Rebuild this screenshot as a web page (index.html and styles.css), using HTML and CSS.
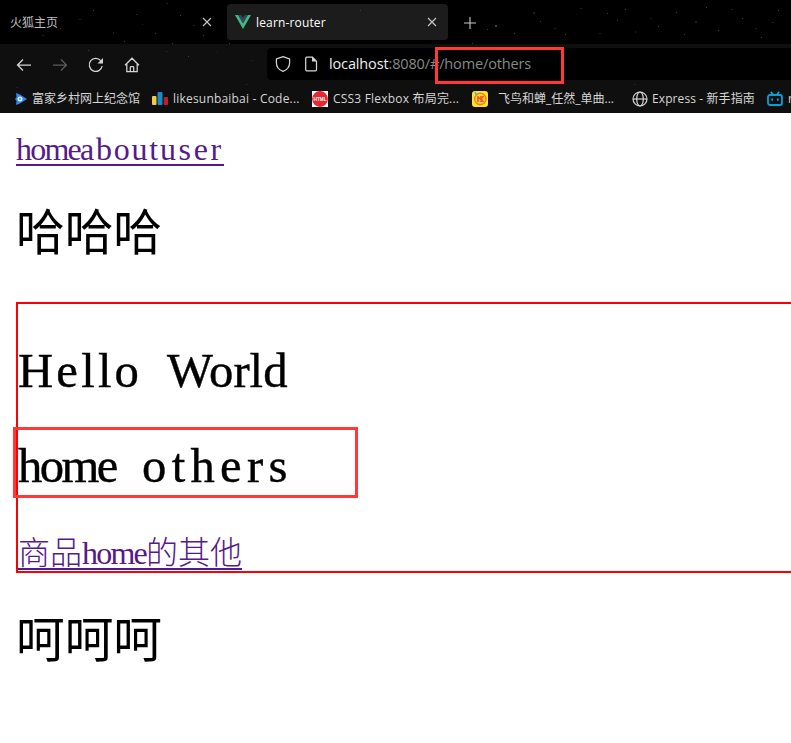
FILE: index.html
```html
<!DOCTYPE html>
<html lang="zh-CN">
<head>
<meta charset="utf-8">
<title>learn-router</title>
<link rel="stylesheet" href="styles.css">
</head>
<body>
<header class="browser">
  <svg class="stars" width="791" height="113" fill="#3c3c3c" aria-hidden="true">
    <path d="M155 33h1v1h-1zM172 43h1v1h-1zM180 15h1v1h-1zM124 41h1v1h-1zM60 28h1v1h-1zM93 10h1v1h-1zM203 35h1v1h-1zM188 56h1v1h-1zM88 50h1v1h-1zM487 29h1v1h-1zM495 25h2v2h-2zM472 43h1v1h-1zM514 33h1v1h-1zM540 21h1v1h-1zM565 34h1v1h-1zM607 13h1v1h-1zM617 20h1v1h-1zM625 9h1v1h-1zM658 26h1v1h-1zM676 12h1v1h-1zM684 34h1v1h-1zM706 7h1v1h-1zM718 30h1v1h-1zM742 18h1v1h-1zM761 37h1v1h-1zM778 10h1v1h-1zM229 43h1v1h-1zM360 10h1v1h-1z"/>
    <path fill="#1e1e1e" d="M30 16h1v1h-1zM42 35h2v1h-2zM79 19h2v1h-2zM113 32h1v2h-1zM136 14h2v1h-2zM142 24h1v1h-1zM166 3h2v1h-2zM193 25h2v1h-2zM251 60h2v1h-2zM216 52h1v1h-1zM166 51h2v1h-2zM533 12h2v2h-2zM554 28h2v1h-2zM580 8h2v1h-2zM599 33h2v1h-2zM635 31h1v2h-1zM650 18h2v1h-1zM695 21h2v2h-2zM731 9h2v1h-2zM755 28h2v1h-2zM772 22h2v1h-2zM16 87h2v1h-2zM246 84h2v1h-2zM634 84h2v1h-2z"/>
  </svg>
  <div class="tabs">
    <div class="tab">
      <span class="tab-title">火狐主页</span>
      <svg class="close" width="10" height="10" viewBox="0 0 10 10"><path d="M1 1l8 8M9 1L1 9"/></svg>
    </div>
    <div class="tab active">
      <svg class="vue" width="16" height="14" viewBox="0 0 16 14"><path fill="#41b883" d="M0 0h3.2L8 8.3 12.8 0H16L8 14z"/><path fill="#35495e" d="M3.2 0h3L8 3.1 9.8 0h3L8 8.3z"/></svg>
      <span class="tab-title learn">learn-router</span>
      <svg class="close" width="10" height="10" viewBox="0 0 10 10"><path d="M1 1l8 8M9 1L1 9"/></svg>
    </div>
    <svg class="plus" width="12" height="12" viewBox="0 0 12 12"><path d="M6 0v12M0 6h12"/></svg>
  </div>
  <nav class="toolbar">
    <div class="buttons">
      <svg width="16" height="16" viewBox="0 0 16 16"><path d="M15 8H1.5M7 2.5L1.5 8 7 13.5"/></svg>
      <svg class="dim" width="16" height="16" viewBox="0 0 16 16"><path d="M1 8h13.5M9 2.5L14.5 8 9 13.5"/></svg>
      <svg width="16" height="16" viewBox="0 0 16 16"><path d="M14.2 9A6.5 6.5 0 1 1 12.8 3.7"/><path class="solid" d="M15 1v5.5H9.5z"/></svg>
      <svg width="16" height="16" viewBox="0 0 16 16"><path d="M1 8.2L8 1.2l7 7M2.8 6.8v7.7h10.4V6.8M6.3 14.5v-4.2q0-.8.8-.8h1.8q.8 0 .8.8v4.2"/></svg>
    </div>
    <div class="urlbar">
      <svg width="16" height="16" viewBox="0 0 16 16"><path d="M8 .7L14.6 3v3.8C14.6 11.2 12 14 8 15.4 4 14 1.4 11.2 1.4 6.8V3z"/></svg>
      <svg width="16" height="16" viewBox="0 0 16 16"><path d="M3.7 1.2H9.5l4 4v8.6q0 1-1 1H3.7q-1 0-1-1V2.2q0-1 1-1z"/><path class="solid" d="M9 1l4.5 4.5H9z"/></svg>
      <span class="url"><span class="host">localhost</span>:8080/#/home/others</span>
    </div>
  </nav>
  <div class="bookmarks">
    <div class="bm b1">
      <svg width="12" height="12" viewBox="0 0 12 12"><path fill="#2f86ed" d="M1 0l4 1.5L12 6 5 10.500 1 12l.5-4L0 6l1.500-2z"/><circle cx="5" cy="6" r="2.5" fill="#d8edff"/><circle cx="5" cy="6" r="1" fill="#4797ed"/></svg>
      <span>富家乡村网上纪念馆</span>
    </div>
    <div class="bm b2">
      <svg width="16" height="14" viewBox="0 0 16 14"><rect y="4" width="4.5" height="9" rx="1" fill="#f7c846"/><rect x="5.5" width="5" height="13" rx="1" fill="#168acb"/><rect x="11.7" y="5" width="4.3" height="8" rx="1" fill="#bb2028"/></svg>
      <span class="wide">likesunbaibai - Code...</span>
    </div>
    <div class="bm b3">
      <svg width="16" height="16" viewBox="0 0 16 16"><path fill="#fff" d="M0 0h16v16H0z"/><circle cx="8" cy="8" r="7.9" fill="#ed252d"/><text x="8" y="10" text-anchor="middle" textLength="13" lengthAdjust="spacingAndGlyphs" class="html-mark">HTML</text></svg>
      <span class="wide">CSS3 Flexbox 布局完...</span>
    </div>
    <div class="bm b4">
      <svg width="16" height="16" viewBox="0 0 16 16"><rect width="16" height="16" rx="3" fill="#ffe32e"/><circle cx="8.3" cy="8" r="5.7" fill="#ffdc3b" stroke="#ff7a18" stroke-width="1.4"/><path stroke="#f7571b" stroke-width="1.6" fill="none" d="M6 5v6M8.600 8L6 6.500M11.500 5L9 8l2.500 3M9 5v6"/><path stroke="#25c6d2" stroke-width="1.5" d="M3 1l1.500 3"/></svg>
      <span>飞鸟和蝉_任然_单曲...</span>
    </div>
    <div class="bm b5">
      <svg width="16" height="16" viewBox="0 0 16 16" fill="none" stroke="#d4d4d4" stroke-width="1.2"><circle cx="8" cy="8" r="7"/><ellipse cx="8" cy="8" rx="3.3" ry="7"/><path d="M1 8h14"/></svg>
      <span class="express">Express - 新手指南</span>
    </div>
    <div class="bm b6">
      <svg width="16" height="16" viewBox="0 0 16 16" fill="none" stroke="#079fd7" stroke-width="1.8"><rect x="1" y="4" width="14" height="10" rx="2"/><path d="M4 .8L6.200 4M12 .8L9.800 4M5.200 7.500v2.300M10.800 7.500v2.300"/></svg>
      <span>n</span>
    </div>
  </div>
  <div class="mark mark-url"></div>
</header>
<main class="page">
  <a class="link links"><span class="w-home">home</span><span class="w-about">about</span><span class="w-user">user</span></a>
  <h1 class="title first">哈哈哈</h1>
  <section class="view">
    <h1 class="title hello"><span class="word w-hello">Hello</span> <span class="word w-world">World</span></h1>
    <h1 class="title others"><span class="word w-home2">home</span> <span class="word w-others">others</span></h1>
    <a class="link goods">商品<span class="latin">home</span>的其他</a>
    <div class="mark mark-view"></div>
  </section>
  <h1 class="title last">呵呵呵</h1>
</main>
</body>
</html>
```
FILE: styles.css
```css
* { box-sizing: border-box; }
body { margin: 0; width: 791px; height: 743px; overflow: hidden; background: #fff; }
svg { display: block; flex: none; }
.browser { position: relative; height: 113px; background: #0f0f0f; color: #d6d6d6; font: 12px/18px "Open Sans", "Noto Sans CJK SC", sans-serif; }
.stars { position: absolute; top: 0; left: 0; }
.tabs { height: 44px; padding-top: 4px; display: flex; background: #000; }
.tab { width: 227px; height: 36px; padding: 0 15px 0 10px; display: flex; align-items: center; justify-content: space-between; color: #bdbdbd; }
.tab.active { width: 221px; padding: 0 11px 0 8px; background: #1c1c1c; border-radius: 4px; color: #fff; justify-content: flex-start; }
.active .close { margin-left: auto; }
.tab-title { padding-top: 2px; }
.learn { margin-left: 5px; letter-spacing: 0.15px; }
.close, .plus { fill: none; stroke: #c8c8c8; stroke-width: 1.1; }
.plus { margin: 13px 0 0 16px; }
.toolbar { height: 40px; padding: 4px 0 0 16px; display: flex; }
.buttons { width: 251px; padding-top: 9px; display: flex; gap: 20px; }
.toolbar svg { fill: none; stroke: #d5d5d5; stroke-width: 1.25; }
.toolbar .dim { stroke: #5c5c5c; }
.toolbar .solid { fill: #d5d5d5; stroke: none; }
.urlbar { flex: 1; height: 32px; padding-left: 8px; display: flex; align-items: center; background: #000; border-radius: 4px 0 0 4px; }
.urlbar svg + svg { margin-left: 12px; }
.url { margin-left: 10px; font-size: 14.5px; letter-spacing: -0.14px; color: #888; white-space: nowrap; }
.host { color: #eee; }
.bookmarks { height: 29px; display: flex; overflow: hidden; }
.bm { flex: none; height: 29px; display: flex; align-items: center; gap: 5px; white-space: nowrap; }
.b1 { width: 152px; padding-left: 15px; }
.b2 { width: 160px; }
.b3 { width: 160px; }
.b4 { width: 160px; gap: 10px; }
.b5 { width: 135px; gap: 4px; }
.wide { letter-spacing: 0.2px; }
.express { letter-spacing: 0.1px; }
.html-mark { font: bold 5px "Liberation Sans", sans-serif; fill: #fff; }
.mark { position: absolute; border: 3px solid #ff3838; }
.mark-url { left: 435px; top: 47px; width: 129px; height: 37px; }
.page { height: 630px; padding: 16px 0 0 16px; font-family: "Liberation Serif", "Noto Sans CJK SC", serif; }
.link { display: block; width: max-content; height: 37px; border-bottom: 2px solid #551a8b; color: #551a8b; font-size: 32px; line-height: 40px; font-weight: 300; white-space: nowrap; }
.links { width: 208px; }
.w-home { letter-spacing: -1.8px; }
.w-about { letter-spacing: 1.8px; }
.w-user { letter-spacing: 2.6px; }
.title { margin: 0; height: 64px; font-size: 48.7px; line-height: 64px; font-weight: 400; white-space: nowrap; }
.first { margin-top: 35px; padding-top: 1px; }
.view { position: relative; height: 271px; margin-top: 37px; padding-top: 35px; border: 2px solid #f00; border-right: 0; }
.hello, .others { display: flex; gap: 25px; -webkit-text-stroke: 0.4px #000; }
.others { margin-top: 31px; }
.w-hello { width: 124px; letter-spacing: 3.2px; }
.w-world { letter-spacing: 0; }
.w-home2 { width: 99px; letter-spacing: -2.6px; }
.w-others { letter-spacing: 5.3px; }
.goods { margin-top: 35px; }
.latin { letter-spacing: -1.8px; }
.mark-view { left: -5px; top: 123px; width: 345px; height: 71px; }
.last { margin-top: 35px; padding-top: 1px; }
```
